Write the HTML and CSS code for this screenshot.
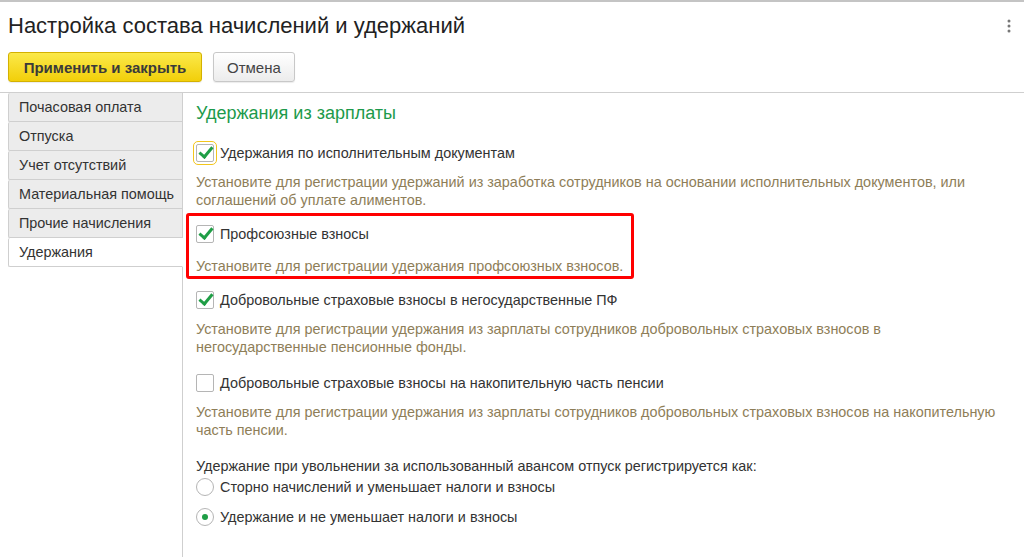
FILE: index.html
```html
<!DOCTYPE html>
<html lang="ru">
<head>
    <meta charset="UTF-8">
    <title>Настройка состава начислений и удержаний</title>
    <link rel="stylesheet" href="styles.css">
</head>
<body>
    <div class="header">
        <h1>Настройка состава начислений и удержаний</h1>
        <span class="more">
            <svg width="4" height="14" viewBox="0 0 4 14"><circle cx="2" cy="2" r="1.5"/><circle cx="2" cy="7" r="1.5"/><circle cx="2" cy="12" r="1.5"/></svg>
        </span>
    </div>
    <div class="toolbar">
        <button class="btn btn-primary">Применить и закрыть</button>
        <button class="btn">Отмена</button>
    </div>
    <div class="main">
        <div class="tabs">
            <div class="tab">Почасовая оплата</div>
            <div class="tab">Отпуска</div>
            <div class="tab">Учет отсутствий</div>
            <div class="tab">Материальная помощь</div>
            <div class="tab">Прочие начисления</div>
            <div class="tab active">Удержания</div>
        </div>
        <div class="content">
            <h2>Удержания из зарплаты</h2>

            <div class="option">
                <label class="check-row"><span class="box focused checked"></span>Удержания по исполнительным документам</label>
                <p class="hint">Установите для регистрации удержаний из заработка сотрудников на основании исполнительных документов, или соглашений об уплате алиментов.</p>
            </div>

            <div class="option highlight">
                <label class="check-row"><span class="box checked"></span>Профсоюзные взносы</label>
                <p class="hint">Установите для регистрации удержания профсоюзных взносов.</p>
            </div>

            <div class="option">
                <label class="check-row"><span class="box checked"></span>Добровольные страховые взносы в негосударственные ПФ</label>
                <p class="hint">Установите для регистрации удержания из зарплаты сотрудников добровольных страховых взносов в<br>негосударственные пенсионные фонды.</p>
            </div>

            <div class="option">
                <label class="check-row"><span class="box"></span>Добровольные страховые взносы на накопительную часть пенсии</label>
                <p class="hint">Установите для регистрации удержания из зарплаты сотрудников добровольных страховых взносов на накопительную<br>часть пенсии.</p>
            </div>

            <div class="group">
                <div class="group-title">Удержание при увольнении за использованный авансом отпуск регистрируется как:</div>
                <label class="radio-row"><span class="radio"></span>Сторно начислений и уменьшает налоги и взносы</label>
                <label class="radio-row"><span class="radio on"></span>Удержание и не уменьшает налоги и взносы</label>
            </div>
        </div>
    </div>
</body>
</html>
```

FILE: styles.css
```css
body { margin: 0; font-family: Arial, "Liberation Sans", sans-serif; font-size: 14.4px; color: #333; background: #fff; border-top: 2px solid #c4c4c4; height: 555px; overflow: hidden; display: flex; flex-direction: column; }

.header { display: flex; align-items: center; justify-content: space-between; padding: 12px 13px 0 8px; height: 24px; }
h1 { margin: 0; font-size: 22px; font-weight: normal; color: #222; }
.more svg { fill: #777; display: block; }

.toolbar { display: flex; gap: 11px; padding: 14px 8px 10px; }
.btn { font-family: inherit; font-size: 15px; height: 30px; padding: 0 13px; border: 1px solid #c8c8c8; border-radius: 3px; background: linear-gradient(#fff, #ececec); color: #444; box-shadow: 0 1px 1px rgba(0,0,0,0.08); }
.btn-primary { font-weight: bold; color: #3a3a3a; background: linear-gradient(#fbe94a, #f2cf0a); border-color: #d4b100; padding: 0 10px; width: 194px; }

.main { flex: 1; display: flex; border-top: 1px solid #cfcfcf; }
.tabs { width: 174px; padding-left: 8px; border-right: 1px solid #cfcfcf; }
.tab { height: 28px; line-height: 28px; padding-left: 10px; background: #ececec; border: 1px solid #cfcfcf; border-top: none; border-right: none; border-radius: 2px 0 0 2px; color: #333; white-space: nowrap; }
.tab.active { background: #fff; margin-right: -1px; position: relative; border-right: 1px solid #fff; }

.content { padding: 0 0 0 11px; flex: 1; }
h2 { margin: 10px 0 18px 2px; font-size: 18px; font-weight: normal; color: #1d9a4b; }

.option { margin-bottom: 16px; }
.check-row { display: flex; align-items: center; gap: 6px; height: 22px; color: #333; }
.box { width: 16px; height: 16px; border: 1px solid #b5b5b5; border-radius: 2px; background: #fff; position: relative; margin-left: 2px; }
.box.checked::after { content: ""; position: absolute; left: 5px; top: -1px; width: 5px; height: 11px; border: solid #1f9e46; border-width: 0 3px 3px 0; transform: rotate(40deg); }
.box.focused { outline: 1px solid #f3c61c; outline-offset: 2px; }
.hint { margin: 9px 0 0 2px; color: #8e7e58; line-height: 18px; }

.highlight { margin: -12px 0 10px -8px; width: fit-content; padding: 7px 8px 1px 5px; border: 3px solid #f00; border-radius: 3px; }
.highlight .hint { margin-top: 12px; }

.group { margin-top: 18px; }
.group-title { color: #333; line-height: 18px; margin: 0 0 1px 2px; }
.radio-row { display: flex; align-items: center; gap: 6px; height: 22px; margin-bottom: 8px; margin-left: 2px; }
.radio { width: 16px; height: 16px; border: 1px solid #b5b5b5; border-radius: 50%; background: #fff; display: flex; align-items: center; justify-content: center; }
.radio.on::after { content: ""; width: 6px; height: 6px; border-radius: 50%; background: #1f9e46; }
```
